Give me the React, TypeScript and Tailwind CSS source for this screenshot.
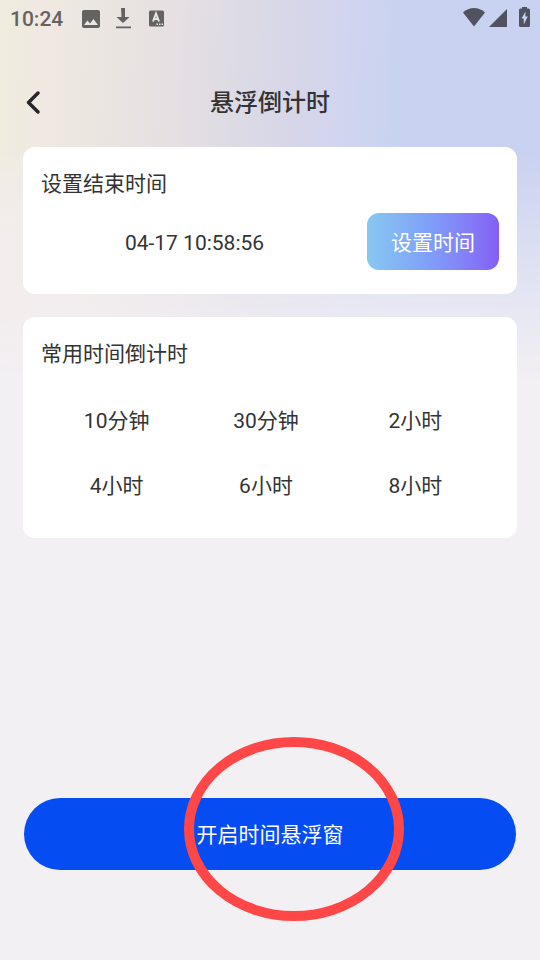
import { useState } from 'react';
import { MdImage } from 'react-icons/md';

const PRESETS = ['10分钟', '30分钟', '2小时', '4小时', '6小时', '8小时'];

function StatusBar() {
  return (
    <div className="flex h-[38px] items-center justify-between px-[10px]">
      <div className="flex items-center text-[#646361]">
        <span className="w-[69px] text-[21px] leading-9 font-medium">10:24</span>
        <MdImage className="size-6" />
        <svg className="ml-3 h-6 w-4" viewBox="0 0 16 24" fill="currentColor">
          <path d="M6 1h4v9h4.500l-6.500 6-6.500-6h5zM1 19.500h15v1.800H1z" />
        </svg>
        <svg className="ml-4 h-6 w-[18px]" viewBox="0 0 18 24">
          <rect x="2" y="3.500" width="15" height="16" rx="1.5" fill="currentColor" />
          <path d="M6 14.500l3-8 3 8M7 12h4" fill="none" stroke="#eae6e8" strokeWidth="2" />
          <path d="M9.500 16.500h1.500v1.500H9.500zM12 16.500h1.500v1.500H12zM14.500 16.500h1.500v1.500h-1.500z" fill="#eae6e8" />
        </svg>
      </div>
      <div className="flex items-center text-[#50535f]">
        <svg className="h-6 w-[22px]" viewBox="0 0 22 24" fill="currentColor">
          <path d="M11 19.500L0 5.500C3 2.500 7 1 11 1s8 1.500 11 4.500z" />
        </svg>
        <svg className="ml-1 h-6 w-[18px]" viewBox="0 0 18 24" fill="currentColor">
          <path d="M18 2v18H0z" />
        </svg>
        <svg className="ml-3 h-6 w-[11px]" viewBox="0 0 11 24">
          <path d="M3 0h5v1.500h1.500Q11 1.500 11 3v15.500Q11 20 9.500 20h-8Q0 20 0 18.500V3Q0 1.500 1.500 1.500H3z" fill="currentColor" />
          <path d="M6.500 4.500L2.500 11.500h2.300v6l3.900-8H6.300z" fill="#c9d2f0" />
        </svg>
      </div>
    </div>
  );
}

export default function App() {
  const [selected, setSelected] = useState('');

  return (
    <div
      className="relative isolate flex min-h-screen flex-col bg-[#f3f0f4] text-[#333333]
                 font-[Roboto,'Noto_Sans_CJK_SC',sans-serif]"
    >
      {/* Fondo degradado */}
      <div
        className="absolute inset-x-0 top-0 -z-10 h-[380px]
                   bg-[linear-gradient(93deg,#f0ecdf_0%,#efe9e2_9%,#e9e4e0_22%,#e6dfe3_32%,#dcdbe4_43%,#d6d6e9_54%,#d1d5ef_62%,#c8d3f0_72%,#c9d1f0_100%)]
                   [mask-image:linear-gradient(180deg,black_40%,rgb(0_0_0/0.7)_58%,rgb(0_0_0/0.3)_80%,transparent)]"
      />
      <div
        className="absolute top-[140px] left-0 -z-10 h-[240px] w-1/2
                   bg-[radial-gradient(ellipse_240px_110px_at_0%_50%,#f4ecee,transparent)]"
      />

      <StatusBar />

      <header className="mt-[29px] mb-2 grid h-[72px] grid-cols-[1fr_auto_1fr] items-center px-[23px]">
        <button aria-label="返回" className="flex h-12 w-6 items-center">
          <svg className="h-6 w-5" viewBox="0 0 20 24" fill="none" stroke="#262626" strokeWidth="3.4" strokeLinecap="round" strokeLinejoin="round">
            <path d="M15 2L5.500 11.500l9.500 9.500" />
          </svg>
        </button>
        <h1 className="text-2xl font-medium">悬浮倒计时</h1>
      </header>

      <main className="flex flex-1 flex-col px-[23px]">
        <section className="rounded-xl bg-white px-[18px] pt-[22px] pb-6">
          <h2 className="text-[21px] leading-[30px]">设置结束时间</h2>
          <div className="mt-[14px] flex items-center gap-[19px]">
            <time className="flex-1 pt-0.5 text-center text-[21px] leading-[30px]">04-17 10:58:56</time>
            <button
              className="h-[57px] w-[132px] rounded-xl bg-linear-to-r from-[#87c8f0] via-[#7f9cf9] to-[#855ef4]
                         pt-0.5 text-[21px] leading-[30px] text-white"
            >
              设置时间
            </button>
          </div>
        </section>

        <section className="mt-[23px] rounded-xl bg-white px-[18px] pt-[22px] pb-5">
          <h2 className="text-[21px] leading-[30px]">常用时间倒计时</h2>
          <div className="mt-[19px] mr-[9px] ml-px grid grid-cols-3">
            {PRESETS.map(label => (
              <button
                key={label}
                aria-pressed={selected === label}
                onClick={() => setSelected(label)}
                className="h-[65px] text-[21px] leading-[30px]"
              >
                {label}
              </button>
            ))}
          </div>
        </section>

        <div className="relative mt-auto mb-[90px] px-px">
          <button className="h-[72px] w-full rounded-full bg-[#064cf3] pt-0.5 text-[21px] leading-[30px] text-white">
            开启时间悬浮窗
          </button>
          {/* Marca roja sobre el botón */}
          <svg
            className="pointer-events-none absolute -top-[61px] left-1/2 -ml-[86px] h-[184px] w-[220px]"
            viewBox="0 0 220 184"
            fill="none"
          >
            <ellipse cx="110" cy="92" rx="105" ry="87" stroke="#ff4747" strokeWidth="10" />
          </svg>
        </div>
      </main>
    </div>
  );
}
